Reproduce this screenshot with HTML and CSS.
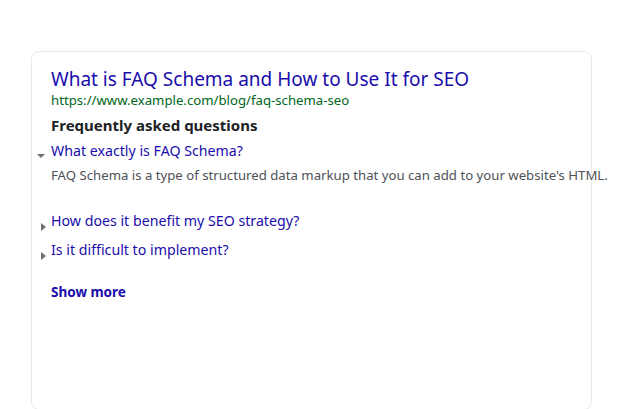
FILE: index.html
```html
<!DOCTYPE html>
<html lang="en">
<head>
<meta charset="utf-8">
<title>FAQ Schema result</title>
<link rel="stylesheet" href="styles.css">
</head>
<body>
<div class="card">
  <a class="title" href="#">What is FAQ Schema and How to Use It for SEO</a>
  <div class="url">https://www.example.com/blog/faq-schema-seo</div>
  <h3 class="faq-heading">Frequently asked questions</h3>
  <div class="faq">
    <div class="faq-item">
      <div class="q"><span class="marker marker-down"></span><a href="#">What exactly is FAQ Schema?</a></div>
      <p class="a">FAQ Schema is a type of structured data markup that you can add to your website's HTML.</p>
    </div>
    <div class="faq-item">
      <div class="q"><span class="marker marker-right"></span><a href="#">How does it benefit my SEO strategy?</a></div>
    </div>
    <div class="faq-item">
      <div class="q"><span class="marker marker-right"></span><a href="#">Is it difficult to implement?</a></div>
    </div>
  </div>
  <a class="more" href="#">Show more</a>
</div>
</body>
</html>
```

FILE: styles.css
```css
html, body {
  margin: 0;
  padding: 0;
  background: #ffffff;
}
body {
  padding: 51px 0 0 31px;
  font-family: "Segoe UI", "Noto Sans", "Open Sans", sans-serif;
}
.card {
  box-sizing: border-box;
  width: 561px;
  height: 359px;
  border: 1px solid #e9e9e9;
  border-radius: 8px;
  padding: 14px 19px 0 19px;
  display: flex;
  flex-direction: column;
  align-items: flex-start;
}
a {
  text-decoration: none;
}
.title {
  font-size: 19px;
  line-height: 26px;
  color: #1a0dab;
}
.url {
  font-size: 13.2px;
  line-height: 17px;
  color: #006621;
}
.faq-heading {
  margin: 5px 0 0 0;
  font-size: 15px;
  line-height: 22px;
  font-weight: 700;
  color: #202124;
}
.faq {
  margin-top: 4px;
  display: flex;
  flex-direction: column;
  gap: 7px;
}
.q {
  display: flex;
  align-items: flex-start;
  font-size: 14.2px;
  line-height: 22px;
}
.q a {
  color: #1a0dab;
}
.marker {
  flex: none;
  width: 14px;
  height: 22px;
  margin-left: -14px;
}
.marker::before {
  content: "";
  display: block;
  width: 0;
  height: 0;
}
.marker-down::before {
  margin: 14px 0 0 0;
  border-left: 4px solid transparent;
  border-right: 4px solid transparent;
  border-top: 4px solid #707070;
}
.marker-right::before {
  margin: 13px 0 0 4px;
  border-top: 4px solid transparent;
  border-bottom: 4px solid transparent;
  border-left: 5px solid #707070;
}
.a {
  margin: 3px 0 18px 0;
  font-size: 13.2px;
  line-height: 20px;
  color: #4d5156;
  white-space: nowrap;
}
.more {
  margin-top: 21px;
  font-size: 13.5px;
  line-height: 20px;
  font-weight: 700;
  color: #1a0dab;
}
```
